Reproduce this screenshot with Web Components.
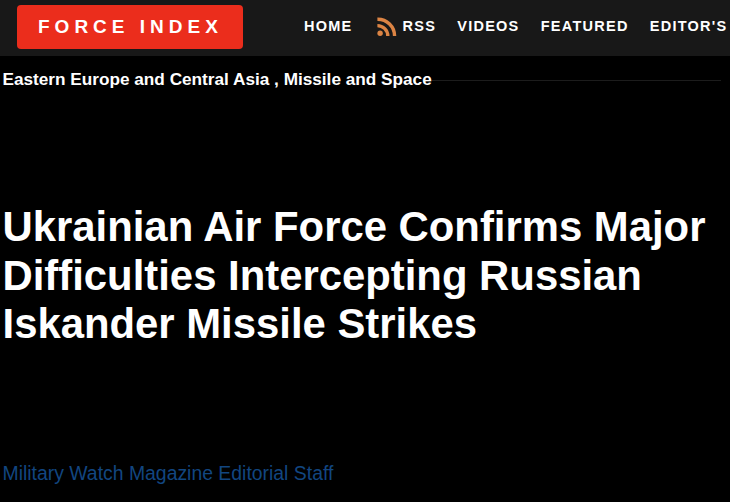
<!DOCTYPE html>
<html lang="en">
<head>
<meta charset="utf-8">
<title>Force Index</title>
<style>
  html, body {
    margin: 0;
    height: 100%;
    overflow: hidden;
    background: #000;
  }

  body {
    font-family: "Liberation Sans", Arial, sans-serif;
    color: #fff;
  }
</style>
</head>
<body>
<site-header>
  <brand-button slot="brand">FORCE INDEX</brand-button>
  <nav-item>HOME</nav-item>
  <nav-item icon="rss">RSS</nav-item>
  <nav-item>VIDEOS</nav-item>
  <nav-item>FEATURED</nav-item>
  <nav-item>EDITOR'S</nav-item>
</site-header>
<article-intro>
  <category-line slot="category">Eastern Europe and Central Asia , Missile and Space</category-line>
  <span slot="title">Ukrainian Air Force Confirms Major Difficulties Intercepting Russian Iskander Missile Strikes</span>
  <span slot="author">Military Watch Magazine Editorial Staff</span>
</article-intro>

<script>
/**
 * Base class which stamps the template of the element into its shadow root.
 */
class BaseElement extends HTMLElement {

  /**
   * Construct the element.
   */
  constructor() {
    super();
    const template = document.createElement('template');
    template.innerHTML = this.constructor.markup;
    this.attachShadow({mode: 'open'});
    this.shadowRoot.appendChild(template.content.cloneNode(true));
  }
}

/**
 * `<site-header>` is the dark bar with the brand and the navigation.
 */
class SiteHeader extends BaseElement {
  static get markup() {
    return `
      <style>
        :host {
          display: flex;
          align-items: flex-start;
          box-sizing: border-box;
          height: 56px;
          padding: 5px 0 0 17px;
          background: #181818;
          overflow: hidden;
        }
        nav {
          display: flex;
          flex: none;
          gap: 21.2px;
          height: 42px;
          margin-left: 61px;
        }
      </style>
      <slot name="brand"></slot>
      <nav><slot></slot></nav>`;
  }
}

/**
 * `<brand-button>` is the red site name.
 */
class BrandButton extends BaseElement {
  static get markup() {
    return `
      <style>
        :host {
          display: block;
          flex: none;
          box-sizing: border-box;
          width: 226px;
          height: 43.5px;
          padding-left: 21px;
          border-radius: 4px;
          background: #eb2d1c;
          font-size: 19px;
          font-weight: bold;
          line-height: 43px;
          letter-spacing: 5px;
          white-space: nowrap;
        }
      </style>
      <slot></slot>`;
  }
}

/**
 * `<nav-item>` is one link of the navigation, with an optional feed icon.
 */
class NavItem extends BaseElement {
  static get markup() {
    return `
      <style>
        :host {
          display: flex;
          align-items: center;
          flex: none;
          font-size: 14.5px;
          font-weight: bold;
          letter-spacing: 1.25px;
          white-space: nowrap;
        }
        svg {
          display: none;
          width: 20px;
          height: 20px;
          margin: 1px 5.3px 0 3.5px;
        }
        :host([icon="rss"]) svg {
          display: block;
        }
      </style>
      <svg viewBox="0 0 20 20" fill="none" stroke="#dc8444" stroke-width="3.4">
        <circle cx="3.1" cy="16.3" r="2.7" fill="#dc8444" stroke="none"/>
        <path d="M.4 8.6A10.4 10.4 0 0 1 10.8 19"/>
        <path d="M.4 2.2A16.8 16.8 0 0 1 17.6 19"/>
      </svg>
      <slot></slot>`;
  }
}

/**
 * `<category-line>` is a label followed by a thin rule.
 */
class CategoryLine extends BaseElement {
  static get markup() {
    return `
      <style>
        :host {
          display: flex;
          align-items: center;
          height: 20px;
          font-size: 17.2px;
          font-weight: bold;
          line-height: 20px;
          white-space: nowrap;
        }
        .rule {
          flex: 1;
          height: 1px;
          margin-top: 2px;
          background: #1c1c1c;
        }
      </style>
      <slot></slot>
      <div class="rule"></div>`;
  }
}

/**
 * `<article-intro>` lays out the category, headline and author.
 */
class ArticleIntro extends BaseElement {
  static get markup() {
    return `
      <style>
        :host {
          display: block;
          padding: 13px 9px 0 2.5px;
        }
        h1 {
          width: 718px;
          margin: 114px 0 0;
          font-size: 41.85px;
          line-height: 48.6px;
        }
        .author {
          margin-top: 113px;
          font-size: 19.4px;
          line-height: 22px;
          color: #124680;
        }
      </style>
      <slot name="category"></slot>
      <h1><slot name="title"></slot></h1>
      <div class="author"><slot name="author"></slot></div>`;
  }
}

// Define the elements.
window.customElements.define('site-header', SiteHeader);
window.customElements.define('brand-button', BrandButton);
window.customElements.define('nav-item', NavItem);
window.customElements.define('category-line', CategoryLine);
window.customElements.define('article-intro', ArticleIntro);
</script>
</body>
</html>
